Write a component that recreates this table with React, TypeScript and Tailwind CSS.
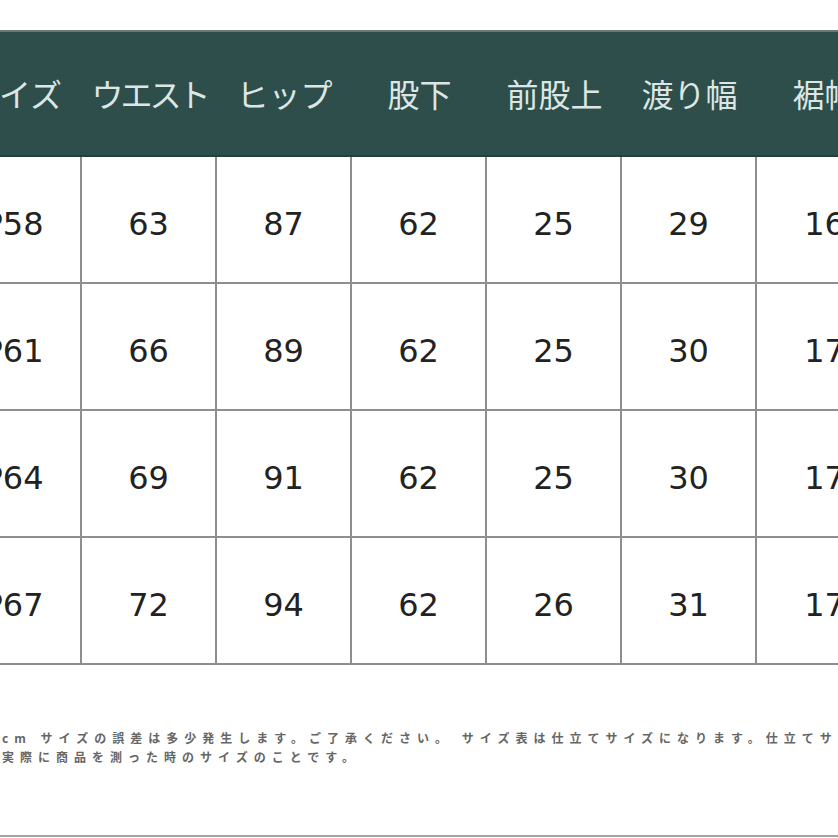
const headers = [
  { label: "サイズ", cls: "" },
  { label: "ウエスト", cls: "tracking-[-3px]" },
  { label: "ヒップ", cls: "" },
  { label: "股下", cls: "" },
  { label: "前股上", cls: "" },
  { label: "渡り幅", cls: "" },
  { label: "裾幅", cls: "" },
];

const rows = [
  ["P58", "63", "87", "62", "25", "29", "16"],
  ["P61", "66", "89", "62", "25", "30", "17"],
  ["P64", "69", "91", "62", "25", "30", "17"],
  ["P67", "72", "94", "62", "26", "31", "17"],
];

function HeaderRow() {
  return (
    <div className="grid h-[127px] grid-cols-[repeat(7,135px)] border-t-2 border-b-2 border-t-[#6b7875] border-b-[#253f3b] bg-[#2d4e4a]">
      {headers.map((h) => (
        <div
          key={h.label}
          className={
            "flex items-center justify-center pb-[1px] text-[32px] leading-none text-[#dce7e5] whitespace-nowrap [font-family:'Noto_Sans_CJK_JP',sans-serif] " +
            h.cls
          }
        >
          {h.label}
        </div>
      ))}
    </div>
  );
}

function DataRow({ cells }: { cells: string[] }) {
  return (
    <div className="grid h-[127px] grid-cols-[repeat(7,135px)] border-b-2 border-[#8e8e8e]">
      {cells.map((c, i) => (
        <div
          key={i}
          className={
            "flex items-center justify-center pt-[9px] text-[32px] leading-none text-[#222] [font-family:'DejaVu_Sans',Verdana,sans-serif] " +
            (i < cells.length - 1 ? "border-r-2 border-[#8e8e8e]" : "")
          }
        >
          {c}
        </div>
      ))}
    </div>
  );
}

export default function App() {
  return (
    <div className="flex h-[838px] w-[838px] flex-col overflow-hidden bg-white">
      <div className="ml-[-53px] w-[945px] pt-[30px]">
        <HeaderRow />
        {rows.map((r) => (
          <DataRow key={r[0]} cells={r} />
        ))}
      </div>

      <div className="mt-[63px] pl-[2px] text-[12px] leading-[19px] font-semibold tracking-[6px] whitespace-nowrap text-[#666] [font-family:'Noto_Sans_CJK_JP',sans-serif]">
        <p>cm サイズの誤差は多少発生します。ご了承ください。 サイズ表は仕立てサイズになります。仕立てサイズとは</p>
        <p>実際に商品を測った時のサイズのことです。</p>
      </div>

      <div className="mt-auto mb-[1px] h-[2px] w-full bg-[#a3a3a3]" />
    </div>
  );
}
